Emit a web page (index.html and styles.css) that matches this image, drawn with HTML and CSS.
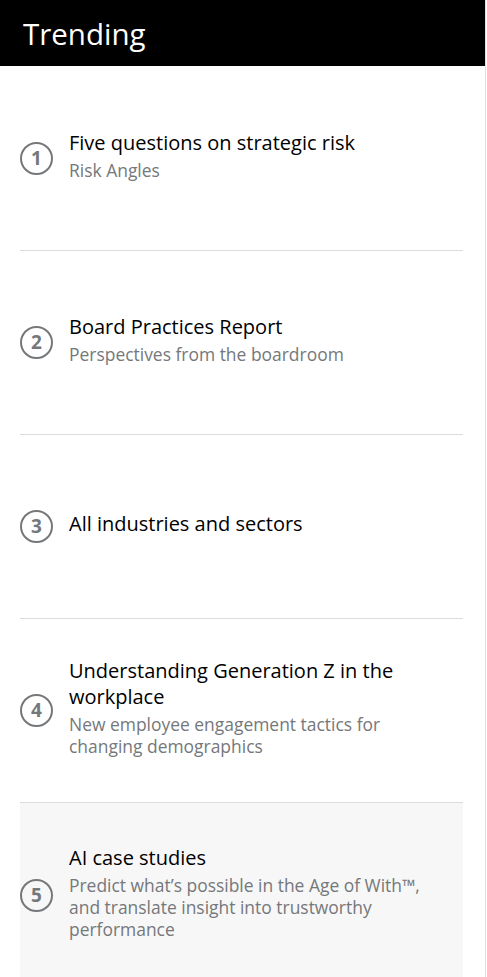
FILE: index.html
```html
<!DOCTYPE html>
<html lang="en">
<head>
<meta charset="utf-8">
<title>Trending</title>
<link rel="stylesheet" href="styles.css">
</head>
<body>
<div class="panel">
  <header class="head"><h2 class="head-title">Trending</h2></header>
  <ol class="list">
    <li class="item">
      <span class="num">1</span>
      <div class="text">
        <div class="title">Five questions on strategic risk</div>
        <div class="sub">Risk Angles</div>
      </div>
    </li>
    <li class="item">
      <span class="num">2</span>
      <div class="text">
        <div class="title">Board Practices Report</div>
        <div class="sub">Perspectives from the boardroom</div>
      </div>
    </li>
    <li class="item">
      <span class="num">3</span>
      <div class="text">
        <div class="title">All industries and sectors</div>
      </div>
    </li>
    <li class="item">
      <span class="num">4</span>
      <div class="text">
        <div class="title">Understanding Generation Z in the workplace</div>
        <div class="sub">New employee engagement tactics for changing demographics</div>
      </div>
    </li>
    <li class="item item-active">
      <span class="num">5</span>
      <div class="text">
        <div class="title">AI case studies</div>
        <div class="sub">Predict what’s possible in the Age of With™, and translate insight into trustworthy performance</div>
      </div>
    </li>
  </ol>
</div>
</body>
</html>
```
FILE: styles.css
```css
html, body {
  margin: 0;
  padding: 0;
  background: #fff;
}
body {
  font-family: "Open Sans", "Liberation Sans", sans-serif;
  overflow: hidden;
  height: 977px;
}
.panel {
  width: 486px;
  border-right: 1px solid #e0e0e0;
  min-height: 977px;
  box-sizing: border-box;
}
.head {
  background: #000;
  height: 66px;
  display: flex;
  align-items: center;
  padding-left: 23px;
}
.head-title {
  margin: 0;
  color: #fff;
  font-weight: 400;
  font-size: 29.5px;
  line-height: 1;
  padding-top: 2px;
}
.list {
  list-style: none;
  margin: 0;
  padding: 1px 22px 0 20px;
}
.item {
  display: flex;
  align-items: center;
  min-height: 183px;
  border-bottom: 1px solid #dcdcdc;
}
.item-active {
  background: #f7f7f7;
  border-bottom: none;
  min-height: 184px;
}
.num {
  flex: none;
  width: 29px;
  height: 29px;
  border: 2px solid #75787b;
  border-radius: 50%;
  display: flex;
  align-items: center;
  justify-content: center;
  color: #75787b;
  font-size: 19px;
  font-weight: 700;
  line-height: 1;
  margin-right: 16px;
}
.text {
  padding-right: 20px;
  padding-bottom: 6px;
}
.title {
  color: #000;
  font-size: 20px;
  line-height: 26px;
}
.sub {
  color: #75787b;
  font-size: 17.45px;
  line-height: 22px;
  margin-top: 3px;
}
```
